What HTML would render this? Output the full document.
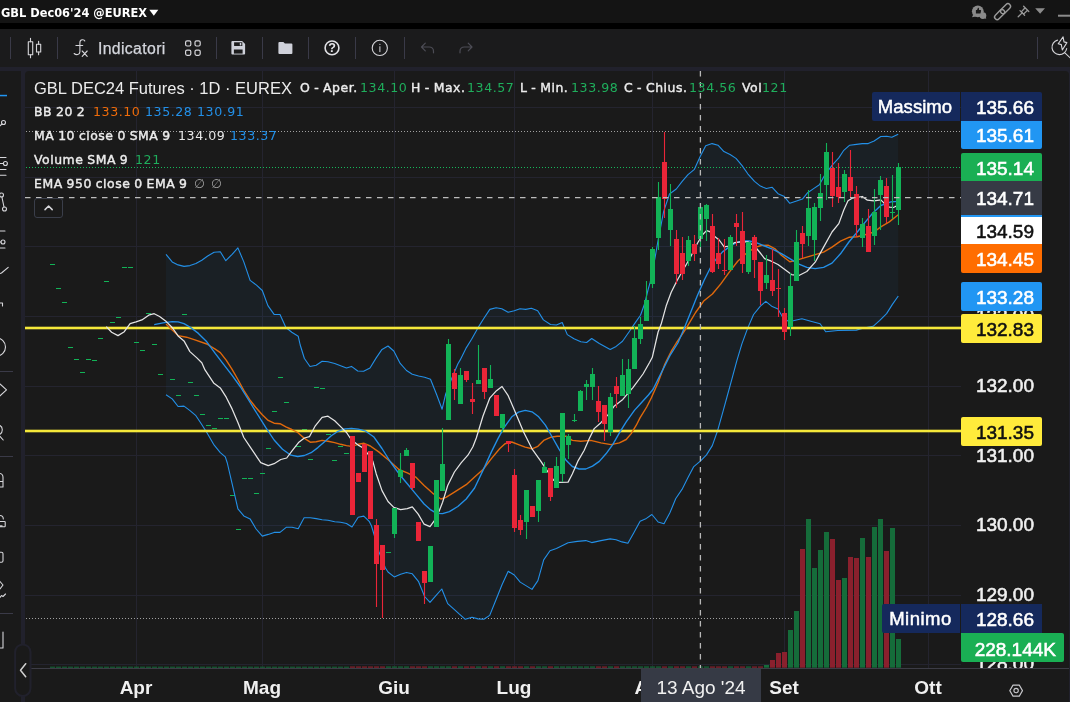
<!DOCTYPE html>
<html lang="it">
<head>
<meta charset="utf-8">
<title>GBL Dec06'24 @EUREX</title>
<style>
*{box-sizing:border-box;margin:0;padding:0}
html,body{width:1070px;height:702px;overflow:hidden;background:#21212c}
body{position:relative;font-family:"Liberation Sans",sans-serif;color:#e6e6e6}
.abs{position:absolute}
.leg,.val,.pl,.ax,.tl,.txt{will-change:transform}
#titlebar{left:0;top:0;width:1070px;height:23px;background:#141414}
#blackstrip{left:0;top:23px;width:1070px;height:6px;background:#000}
#toolbar{left:0;top:29px;width:1070px;height:38px;background:#1b1b1c}
#leftpanel{left:0;top:71px;width:21px;height:631px;background:#1a1a1a}
#chartpanel{left:25px;top:71px;width:1044px;height:631px;background:#1a1a1a;border-radius:4px 4px 0 0}
#title{left:1px;top:5px;font-family:"DejaVu Sans","Liberation Sans",sans-serif;font-weight:bold;font-size:11.4px;line-height:16px;color:#fff;white-space:pre;letter-spacing:0}
.tsep{position:absolute;top:37px;width:1px;height:22px;background:#3a3a48}
.lsep{position:absolute;left:0;width:13px;height:1px;background:#3a3a48}
.leg{position:absolute;white-space:pre;font-family:"DejaVu Sans","Liberation Sans",sans-serif;font-weight:normal;font-size:12.45px;letter-spacing:0.52px;word-spacing:-0.6px;-webkit-text-stroke:0.4px #ececec;line-height:18px;color:#ececec}
.val{position:absolute;white-space:pre;font-family:"DejaVu Sans","Liberation Sans",sans-serif;font-size:12.6px;letter-spacing:0.55px;line-height:18px;margin-left:-0.6px}
.g{color:#1fae5c}.b{color:#2390e8}.o{color:#ef6c0a}.w{color:#e6e6e6}.gr{color:#9a9a9a}
.pl{position:absolute;left:961px;width:81px;height:28.6px;font-weight:normal;-webkit-text-stroke:0.55px;padding-top:2px;font-size:19px;line-height:28.6px;text-align:right;padding-right:8px;color:#fff;white-space:pre}
.ax{position:absolute;left:961px;width:81px;font-weight:normal;-webkit-text-stroke:0.55px;font-size:19px;line-height:22px;height:22px;text-align:right;padding-right:8px;color:#f0f0f0;white-space:pre}
.tl{position:absolute;top:677px;font-weight:bold;font-size:19px;line-height:22px;color:#f0f0f0;white-space:pre;transform:translateX(-50%)}
</style>
</head>
<body>
<div id="titlebar" class="abs"></div>
<div id="blackstrip" class="abs"></div>
<div id="toolbar" class="abs"></div>
<div id="leftpanel" class="abs"></div>
<div id="chartpanel" class="abs"></div>

<div id="title" class="abs txt">GBL Dec06'24 @EUREX</div>

<!-- toolbar separators -->
<div class="tsep" style="left:10px"></div>
<div class="tsep" style="left:57px"></div>
<div class="tsep" style="left:216px"></div>
<div class="tsep" style="left:262px"></div>
<div class="tsep" style="left:308px"></div>
<div class="tsep" style="left:355px"></div>
<div class="tsep" style="left:404px"></div>
<div class="tsep" style="left:1037px"></div>
<div class="abs txt" style="left:97.6px;top:39.3px;font-size:15.8px;letter-spacing:0.35px;-webkit-text-stroke:0.25px #d4d6dd;line-height:20px;color:#d4d6dd;white-space:pre">Indicatori</div>

<!-- left separators -->
<div class="lsep" style="top:371px"></div>
<div class="lsep" style="top:456px"></div>
<div class="lsep" style="top:613px"></div>

<svg class="abs" style="left:0;top:0" width="1070" height="702" viewBox="0 0 1070 702">
<rect x="136.0" y="71" width="1" height="597" fill="#24242f"/>
<rect x="262.0" y="71" width="1" height="597" fill="#24242f"/>
<rect x="394.0" y="71" width="1" height="597" fill="#24242f"/>
<rect x="514.0" y="71" width="1" height="597" fill="#24242f"/>
<rect x="652.0" y="71" width="1" height="597" fill="#24242f"/>
<rect x="784.0" y="71" width="1" height="597" fill="#24242f"/>
<rect x="928.0" y="71" width="1" height="597" fill="#24242f"/>
<rect x="25" y="664.0" width="936" height="1" fill="#24242f"/>
<rect x="25" y="595.0" width="936" height="1" fill="#24242f"/>
<rect x="25" y="525.0" width="936" height="1" fill="#24242f"/>
<rect x="25" y="455.0" width="936" height="1" fill="#24242f"/>
<rect x="25" y="386.0" width="936" height="1" fill="#24242f"/>
<rect x="25" y="316.0" width="936" height="1" fill="#24242f"/>
<rect x="25" y="246.0" width="936" height="1" fill="#24242f"/>
<rect x="25" y="177.0" width="936" height="1" fill="#24242f"/>
<rect x="25" y="107.0" width="936" height="1" fill="#24242f"/>
<polygon points="166.0,254.3 172.2,261.9 178.1,264.9 184.0,266.4 190.0,265.6 195.9,263.6 201.8,260.2 207.7,256.0 214.1,252.3 220.3,251.8 225.8,260.7 232.1,254.3 237.9,247.9 243.8,261.9 250.1,280.4 256.5,285.1 262.3,290.5 267.9,305.6 274.1,314.4 280.0,314.5 285.9,327.5 291.8,332.2 298.2,336.2 300.2,345.0 304.4,358.5 310.0,366.5 316.2,365.2 322.1,361.3 328.0,361.8 334.7,363.5 340.6,365.7 346.5,368.0 351.5,366.4 357.7,371.0 363.6,371.3 370.0,368.0 376.2,357.9 382.0,349.4 388.0,346.0 393.8,351.0 400.2,363.4 406.5,370.5 412.3,374.2 418.6,376.0 424.6,377.2 430.5,379.2 436.4,394.0 442.1,409.2 445.7,394.0 451.9,378.0 457.8,364.0 460.2,359.9 465.9,348.4 471.6,339.3 477.9,327.9 483.6,318.7 489.8,309.4 496.1,307.7 501.8,308.7 508.1,312.3 514.3,310.8 520.0,308.7 525.7,309.4 531.4,308.3 537.7,310.8 543.4,319.9 550.5,324.5 556.4,325.0 562.2,322.5 567.3,334.6 574.0,338.8 580.8,341.8 586.6,342.5 591.7,338.5 599.3,343.5 610.2,349.4 616.1,346.4 622.5,341.3 629.5,331.2 634.6,323.6 640.5,315.2 644.7,303.5 648.0,290.0 650.2,282.2 655.2,257.0 657.8,241.8 660.3,229.0 663.6,211.7 669.5,194.0 676.3,189.0 682.2,181.4 688.0,174.7 694.4,169.3 700.3,156.2 705.7,145.7 712.1,143.6 718.0,145.2 723.9,151.6 730.1,154.5 736.0,158.4 741.9,165.4 747.8,173.8 754.5,181.4 760.4,186.1 766.3,188.5 772.2,187.3 778.0,193.7 783.9,196.2 789.8,203.3 796.6,201.1 802.4,199.1 807.7,192.7 813.6,188.6 819.4,184.8 824.5,175.5 832.0,165.4 838.8,157.9 843.8,150.3 849.7,145.2 856.5,144.4 862.3,143.6 868.2,143.6 874.1,141.0 880.8,136.5 886.7,136.3 891.8,137.3 898.2,134.3 898.3,296.0 892.4,304.4 886.6,313.6 879.8,320.4 873.1,326.3 863.8,328.0 856.3,330.1 837.8,330.5 825.7,331.8 820.1,323.7 810.8,321.2 801.9,318.7 793.2,320.7 788.0,321.0 783.1,317.9 778.0,308.9 772.2,306.6 765.8,301.4 760.4,306.1 753.6,314.5 747.8,327.9 741.9,343.9 736.8,360.8 731.8,379.3 726.7,398.0 723.3,410.3 717.4,431.3 712.3,445.6 706.5,454.9 700.6,460.8 693.8,466.6 688.0,477.6 682.0,489.4 675.8,498.5 669.9,512.8 664.0,523.7 658.1,522.0 651.9,514.5 646.4,518.4 640.1,521.2 633.7,533.0 627.9,543.3 622.0,541.9 616.1,539.7 610.2,538.9 600.9,540.6 591.7,542.6 585.8,540.6 577.4,541.4 568.1,542.8 556.4,548.6 550.0,550.7 543.7,559.9 537.9,580.6 532.0,589.4 520.2,582.1 514.3,575.0 508.2,571.3 502.0,584.8 495.6,600.8 489.7,615.4 483.8,619.3 478.0,618.9 472.0,617.2 465.3,619.3 459.4,614.2 453.6,608.8 447.7,603.6 441.8,589.0 435.9,595.7 430.0,602.4 424.6,596.5 418.6,581.7 412.3,573.8 406.5,572.5 400.6,574.2 394.2,576.9 388.0,572.0 385.4,568.0 379.0,552.0 374.5,536.0 371.5,526.0 369.4,521.7 363.8,516.1 358.2,517.2 352.0,527.0 346.5,523.5 340.6,522.3 334.7,521.8 328.0,520.3 322.1,519.8 316.2,518.6 310.3,517.8 304.1,517.8 298.2,528.7 292.1,527.3 286.2,527.3 280.0,532.4 274.1,532.4 268.2,534.4 262.3,536.1 256.1,529.0 250.1,518.9 243.8,515.9 237.9,508.8 232.1,483.6 227.3,463.0 225.3,456.9 220.3,452.7 213.6,444.3 206.8,432.5 200.9,423.2 195.9,415.7 190.0,410.6 184.0,406.1 178.1,406.5 172.2,398.9 166.0,394.7" fill="#2196f3" fill-opacity="0.055"/>
<line x1="26" x2="882" y1="618.5" y2="618.5" stroke="#a0a0a0" stroke-width="1" stroke-dasharray="1 2" shape-rendering="crispEdges"/>
<rect x="50.0" y="666.7" width="5" height="1" fill="#156c3a"/>
<rect x="56.0" y="666.7" width="5" height="1" fill="#156c3a"/>
<rect x="62.0" y="666.7" width="5" height="1" fill="#156c3a"/>
<rect x="68.0" y="666.7" width="5" height="1" fill="#156c3a"/>
<rect x="74.0" y="666.7" width="5" height="1" fill="#156c3a"/>
<rect x="80.0" y="666.7" width="5" height="1" fill="#156c3a"/>
<rect x="86.0" y="666.7" width="5" height="1" fill="#156c3a"/>
<rect x="92.0" y="666.7" width="5" height="1" fill="#156c3a"/>
<rect x="98.0" y="666.7" width="5" height="1" fill="#156c3a"/>
<rect x="104.0" y="666.7" width="5" height="1" fill="#156c3a"/>
<rect x="110.0" y="666.7" width="5" height="1" fill="#156c3a"/>
<rect x="116.0" y="666.7" width="5" height="1" fill="#156c3a"/>
<rect x="122.0" y="666.7" width="5" height="1" fill="#156c3a"/>
<rect x="128.0" y="666.7" width="5" height="1" fill="#156c3a"/>
<rect x="134.0" y="666.7" width="5" height="1" fill="#156c3a"/>
<rect x="140.0" y="666.7" width="5" height="1" fill="#156c3a"/>
<rect x="146.0" y="666.7" width="5" height="1" fill="#156c3a"/>
<rect x="152.0" y="666.7" width="5" height="1" fill="#156c3a"/>
<rect x="158.0" y="666.7" width="5" height="1" fill="#156c3a"/>
<rect x="164.0" y="666.7" width="5" height="1" fill="#156c3a"/>
<rect x="170.0" y="666.7" width="5" height="1" fill="#156c3a"/>
<rect x="176.0" y="666.7" width="5" height="1" fill="#156c3a"/>
<rect x="182.0" y="666.7" width="5" height="1" fill="#156c3a"/>
<rect x="188.0" y="666.7" width="5" height="1" fill="#156c3a"/>
<rect x="194.0" y="666.7" width="5" height="1" fill="#156c3a"/>
<rect x="200.0" y="666.7" width="5" height="1" fill="#156c3a"/>
<rect x="206.0" y="666.7" width="5" height="1" fill="#156c3a"/>
<rect x="212.0" y="666.7" width="5" height="1" fill="#156c3a"/>
<rect x="218.0" y="666.7" width="5" height="1" fill="#156c3a"/>
<rect x="224.0" y="666.7" width="5" height="1" fill="#156c3a"/>
<rect x="230.0" y="666.7" width="5" height="1" fill="#156c3a"/>
<rect x="236.0" y="666.7" width="5" height="1" fill="#156c3a"/>
<rect x="242.0" y="666.7" width="5" height="1" fill="#156c3a"/>
<rect x="248.0" y="666.7" width="5" height="1" fill="#156c3a"/>
<rect x="254.0" y="666.7" width="5" height="1" fill="#156c3a"/>
<rect x="260.0" y="666.7" width="5" height="1" fill="#156c3a"/>
<rect x="266.0" y="666.7" width="5" height="1" fill="#156c3a"/>
<rect x="272.0" y="666.7" width="5" height="1" fill="#156c3a"/>
<rect x="278.0" y="666.7" width="5" height="1" fill="#156c3a"/>
<rect x="284.0" y="666.7" width="5" height="1" fill="#156c3a"/>
<rect x="290.0" y="666.7" width="5" height="1" fill="#156c3a"/>
<rect x="296.0" y="666.7" width="5" height="1" fill="#156c3a"/>
<rect x="302.0" y="666.7" width="5" height="1" fill="#156c3a"/>
<rect x="308.0" y="666.7" width="5" height="1" fill="#156c3a"/>
<rect x="314.0" y="666.7" width="5" height="1" fill="#156c3a"/>
<rect x="320.0" y="666.7" width="5" height="1" fill="#156c3a"/>
<rect x="326.0" y="666.7" width="5" height="1" fill="#156c3a"/>
<rect x="332.0" y="666.7" width="5" height="1" fill="#156c3a"/>
<rect x="338.0" y="666.7" width="5" height="1" fill="#156c3a"/>
<rect x="344.0" y="666.7" width="5" height="1" fill="#156c3a"/>
<rect x="350.0" y="666.5" width="5" height="1.2" fill="#8a202d"/>
<rect x="356.0" y="666.5" width="5" height="1.2" fill="#8a202d"/>
<rect x="362.0" y="666.5" width="5" height="1.2" fill="#8a202d"/>
<rect x="368.0" y="666.5" width="5" height="1.2" fill="#8a202d"/>
<rect x="374.0" y="666.5" width="5" height="1.2" fill="#8a202d"/>
<rect x="380.0" y="666.5" width="5" height="1.2" fill="#8a202d"/>
<rect x="386.0" y="666.5" width="5" height="1.2" fill="#156c3a"/>
<rect x="392.0" y="666.5" width="5" height="1.2" fill="#156c3a"/>
<rect x="398.0" y="666.5" width="5" height="1.2" fill="#156c3a"/>
<rect x="404.0" y="666.5" width="5" height="1.2" fill="#156c3a"/>
<rect x="410.0" y="666.5" width="5" height="1.2" fill="#8a202d"/>
<rect x="416.0" y="666.5" width="5" height="1.2" fill="#8a202d"/>
<rect x="422.0" y="666.5" width="5" height="1.2" fill="#8a202d"/>
<rect x="428.0" y="666.5" width="5" height="1.2" fill="#156c3a"/>
<rect x="434.0" y="666.5" width="5" height="1.2" fill="#156c3a"/>
<rect x="440.0" y="666.5" width="5" height="1.2" fill="#156c3a"/>
<rect x="446.0" y="666.5" width="5" height="1.2" fill="#156c3a"/>
<rect x="452.0" y="666.5" width="5" height="1.2" fill="#8a202d"/>
<rect x="458.0" y="666.5" width="5" height="1.2" fill="#156c3a"/>
<rect x="464.0" y="666.5" width="5" height="1.2" fill="#8a202d"/>
<rect x="470.0" y="666.5" width="5" height="1.2" fill="#8a202d"/>
<rect x="476.0" y="666.5" width="5" height="1.2" fill="#156c3a"/>
<rect x="482.0" y="666.5" width="5" height="1.2" fill="#8a202d"/>
<rect x="488.0" y="666.5" width="5" height="1.2" fill="#156c3a"/>
<rect x="494.0" y="666.5" width="5" height="1.2" fill="#8a202d"/>
<rect x="500.0" y="666.5" width="5" height="1.2" fill="#156c3a"/>
<rect x="506.0" y="666.5" width="5" height="1.2" fill="#8a202d"/>
<rect x="512.0" y="666.5" width="5" height="1.2" fill="#8a202d"/>
<rect x="518.0" y="666.5" width="5" height="1.2" fill="#8a202d"/>
<rect x="524.0" y="666.5" width="5" height="1.2" fill="#156c3a"/>
<rect x="530.0" y="666.5" width="5" height="1.2" fill="#8a202d"/>
<rect x="536.0" y="666.5" width="5" height="1.2" fill="#156c3a"/>
<rect x="542.0" y="666.5" width="5" height="1.2" fill="#156c3a"/>
<rect x="548.0" y="666.5" width="5" height="1.2" fill="#8a202d"/>
<rect x="554.0" y="666.5" width="5" height="1.2" fill="#156c3a"/>
<rect x="560.0" y="666.5" width="5" height="1.2" fill="#156c3a"/>
<rect x="566.0" y="666.5" width="5" height="1.2" fill="#156c3a"/>
<rect x="572.0" y="666.5" width="5" height="1.2" fill="#156c3a"/>
<rect x="578.0" y="666.5" width="5" height="1.2" fill="#156c3a"/>
<rect x="584.0" y="666.5" width="5" height="1.2" fill="#156c3a"/>
<rect x="590.0" y="666.5" width="5" height="1.2" fill="#156c3a"/>
<rect x="596.0" y="666.5" width="5" height="1.2" fill="#8a202d"/>
<rect x="602.0" y="666.5" width="5" height="1.2" fill="#8a202d"/>
<rect x="608.0" y="666.5" width="5" height="1.2" fill="#156c3a"/>
<rect x="614.0" y="666.5" width="5" height="1.2" fill="#8a202d"/>
<rect x="620.0" y="666.5" width="5" height="1.2" fill="#156c3a"/>
<rect x="626.0" y="666.5" width="5" height="1.2" fill="#156c3a"/>
<rect x="632.0" y="666.5" width="5" height="1.2" fill="#156c3a"/>
<rect x="638.0" y="666.5" width="5" height="1.2" fill="#156c3a"/>
<rect x="644.0" y="666.5" width="5" height="1.2" fill="#156c3a"/>
<rect x="650.0" y="666.5" width="5" height="1.2" fill="#156c3a"/>
<rect x="656.0" y="666.5" width="5" height="1.2" fill="#156c3a"/>
<rect x="662.0" y="666.5" width="5" height="1.2" fill="#8a202d"/>
<rect x="668.0" y="666.5" width="5" height="1.2" fill="#156c3a"/>
<rect x="674.0" y="666.5" width="5" height="1.2" fill="#8a202d"/>
<rect x="680.0" y="666.5" width="5" height="1.2" fill="#8a202d"/>
<rect x="686.0" y="666.5" width="5" height="1.2" fill="#156c3a"/>
<rect x="692.0" y="666.5" width="5" height="1.2" fill="#8a202d"/>
<rect x="698.0" y="666.5" width="5" height="1.2" fill="#156c3a"/>
<rect x="704.0" y="666.5" width="5" height="1.2" fill="#156c3a"/>
<rect x="710.0" y="666.5" width="5" height="1.2" fill="#8a202d"/>
<rect x="716.0" y="666.5" width="5" height="1.2" fill="#8a202d"/>
<rect x="722.0" y="666.5" width="5" height="1.2" fill="#8a202d"/>
<rect x="728.0" y="666.5" width="5" height="1.2" fill="#156c3a"/>
<rect x="734.0" y="666.5" width="5" height="1.2" fill="#8a202d"/>
<rect x="740.0" y="666.5" width="5" height="1.2" fill="#8a202d"/>
<rect x="746.0" y="666.5" width="5" height="1.2" fill="#156c3a"/>
<rect x="752.0" y="666.5" width="5" height="1.2" fill="#8a202d"/>
<rect x="758.0" y="666.5" width="5" height="1.2" fill="#8a202d"/>
<rect x="764.0" y="665" width="5" height="2.7" fill="#156c3a"/>
<rect x="770.0" y="660" width="5" height="7.7" fill="#8a202d"/>
<rect x="776.0" y="653" width="5" height="14.7" fill="#8a202d"/>
<rect x="782.0" y="652" width="5" height="15.7" fill="#8a202d"/>
<rect x="788.0" y="630" width="5" height="37.7" fill="#156c3a"/>
<rect x="794.0" y="611" width="5" height="56.7" fill="#156c3a"/>
<rect x="800.0" y="549" width="5" height="118.7" fill="#8a202d"/>
<rect x="806.0" y="519" width="5" height="148.7" fill="#156c3a"/>
<rect x="812.0" y="568" width="5" height="99.7" fill="#156c3a"/>
<rect x="818.0" y="550" width="5" height="117.7" fill="#156c3a"/>
<rect x="824.0" y="532" width="5" height="135.7" fill="#156c3a"/>
<rect x="830.0" y="539" width="5" height="128.7" fill="#8a202d"/>
<rect x="836.0" y="580" width="5" height="87.7" fill="#8a202d"/>
<rect x="842.0" y="578" width="5" height="89.7" fill="#156c3a"/>
<rect x="848.0" y="557" width="5" height="110.7" fill="#8a202d"/>
<rect x="854.0" y="558" width="5" height="109.7" fill="#8a202d"/>
<rect x="860.0" y="538" width="5" height="129.7" fill="#156c3a"/>
<rect x="866.0" y="557" width="5" height="110.7" fill="#8a202d"/>
<rect x="872.0" y="527" width="5" height="140.7" fill="#156c3a"/>
<rect x="878.0" y="519" width="5" height="148.7" fill="#156c3a"/>
<rect x="884.0" y="551" width="5" height="116.7" fill="#8a202d"/>
<rect x="890.0" y="528" width="5" height="139.7" fill="#156c3a"/>
<rect x="896.0" y="639" width="5" height="28.7" fill="#156c3a"/>
<line x1="26" x2="961" y1="131.5" y2="131.5" stroke="#a0a0a0" stroke-width="1" stroke-dasharray="1 2" shape-rendering="crispEdges"/>
<line x1="26" x2="961" y1="167.5" y2="167.5" stroke="#16b85a" stroke-width="1" stroke-dasharray="1 2" shape-rendering="crispEdges"/>
<rect x="50.0" y="264" width="5" height="1" fill="#12b357"/>
<rect x="56.0" y="288" width="5" height="1" fill="#12b357"/>
<rect x="62.0" y="302" width="5" height="1" fill="#12b357"/>
<rect x="68.0" y="347" width="5" height="1" fill="#12b357"/>
<rect x="74.0" y="359" width="5" height="1" fill="#12b357"/>
<rect x="80.0" y="372" width="5" height="1" fill="#12b357"/>
<rect x="86.0" y="359" width="5" height="1" fill="#12b357"/>
<rect x="92.0" y="360" width="5" height="1" fill="#12b357"/>
<rect x="98.0" y="338" width="5" height="1" fill="#12b357"/>
<rect x="104.0" y="281" width="5" height="1" fill="#12b357"/>
<rect x="110.0" y="322" width="5" height="1" fill="#12b357"/>
<rect x="116.0" y="317" width="5" height="1" fill="#12b357"/>
<rect x="122.0" y="267" width="5" height="1" fill="#12b357"/>
<rect x="128.0" y="267" width="5" height="1" fill="#12b357"/>
<rect x="134.0" y="342" width="5" height="1" fill="#12b357"/>
<rect x="140.0" y="350" width="5" height="1" fill="#12b357"/>
<rect x="146.0" y="313" width="5" height="1" fill="#12b357"/>
<rect x="152.0" y="344" width="5" height="1" fill="#12b357"/>
<rect x="158.0" y="374" width="5" height="1" fill="#12b357"/>
<rect x="164.0" y="327" width="5" height="1" fill="#12b357"/>
<rect x="170.0" y="379" width="5" height="1" fill="#12b357"/>
<rect x="176.0" y="395" width="5" height="1" fill="#12b357"/>
<rect x="182.0" y="314" width="5" height="1" fill="#12b357"/>
<rect x="188.0" y="382" width="5" height="1" fill="#12b357"/>
<rect x="194.0" y="395" width="5" height="1" fill="#12b357"/>
<rect x="200.0" y="414" width="5" height="1" fill="#12b357"/>
<rect x="206.0" y="425" width="5" height="1" fill="#12b357"/>
<rect x="212.0" y="428" width="5" height="1" fill="#12b357"/>
<rect x="218.0" y="418" width="5" height="1" fill="#12b357"/>
<rect x="224.0" y="418" width="5" height="1" fill="#12b357"/>
<rect x="230.0" y="495" width="5" height="1" fill="#12b357"/>
<rect x="236.0" y="529" width="5" height="1" fill="#12b357"/>
<rect x="242.0" y="478" width="5" height="1" fill="#12b357"/>
<rect x="248.0" y="478" width="5" height="1" fill="#12b357"/>
<rect x="254.0" y="493" width="5" height="1" fill="#12b357"/>
<rect x="260.0" y="473" width="5" height="1" fill="#12b357"/>
<rect x="266.0" y="448" width="5" height="1" fill="#12b357"/>
<rect x="272.0" y="411" width="5" height="1" fill="#12b357"/>
<rect x="278.0" y="377" width="5" height="1" fill="#12b357"/>
<rect x="284.0" y="402" width="5" height="1" fill="#12b357"/>
<rect x="290.0" y="430" width="5" height="1" fill="#12b357"/>
<rect x="296.0" y="446" width="5" height="1" fill="#12b357"/>
<rect x="302.0" y="429" width="5" height="1" fill="#12b357"/>
<rect x="308.0" y="459" width="5" height="1" fill="#12b357"/>
<rect x="314.0" y="387" width="5" height="1" fill="#12b357"/>
<rect x="320.0" y="388" width="5" height="1" fill="#12b357"/>
<rect x="326.0" y="434" width="5" height="1" fill="#12b357"/>
<rect x="332.0" y="460" width="5" height="1" fill="#12b357"/>
<rect x="338.0" y="446" width="5" height="1" fill="#12b357"/>
<rect x="344.0" y="453" width="5" height="1" fill="#12b357"/>
<polyline points="166.0,254.3 172.2,261.9 178.1,264.9 184.0,266.4 190.0,265.6 195.9,263.6 201.8,260.2 207.7,256.0 214.1,252.3 220.3,251.8 225.8,260.7 232.1,254.3 237.9,247.9 243.8,261.9 250.1,280.4 256.5,285.1 262.3,290.5 267.9,305.6 274.1,314.4 280.0,314.5 285.9,327.5 291.8,332.2 298.2,336.2 300.2,345.0 304.4,358.5 310.0,366.5 316.2,365.2 322.1,361.3 328.0,361.8 334.7,363.5 340.6,365.7 346.5,368.0 351.5,366.4 357.7,371.0 363.6,371.3 370.0,368.0 376.2,357.9 382.0,349.4 388.0,346.0 393.8,351.0 400.2,363.4 406.5,370.5 412.3,374.2 418.6,376.0 424.6,377.2 430.5,379.2 436.4,394.0 442.1,409.2 445.7,394.0 451.9,378.0 457.8,364.0 460.2,359.9 465.9,348.4 471.6,339.3 477.9,327.9 483.6,318.7 489.8,309.4 496.1,307.7 501.8,308.7 508.1,312.3 514.3,310.8 520.0,308.7 525.7,309.4 531.4,308.3 537.7,310.8 543.4,319.9 550.5,324.5 556.4,325.0 562.2,322.5 567.3,334.6 574.0,338.8 580.8,341.8 586.6,342.5 591.7,338.5 599.3,343.5 610.2,349.4 616.1,346.4 622.5,341.3 629.5,331.2 634.6,323.6 640.5,315.2 644.7,303.5 648.0,290.0 650.2,282.2 655.2,257.0 657.8,241.8 660.3,229.0 663.6,211.7 669.5,194.0 676.3,189.0 682.2,181.4 688.0,174.7 694.4,169.3 700.3,156.2 705.7,145.7 712.1,143.6 718.0,145.2 723.9,151.6 730.1,154.5 736.0,158.4 741.9,165.4 747.8,173.8 754.5,181.4 760.4,186.1 766.3,188.5 772.2,187.3 778.0,193.7 783.9,196.2 789.8,203.3 796.6,201.1 802.4,199.1 807.7,192.7 813.6,188.6 819.4,184.8 824.5,175.5 832.0,165.4 838.8,157.9 843.8,150.3 849.7,145.2 856.5,144.4 862.3,143.6 868.2,143.6 874.1,141.0 880.8,136.5 886.7,136.3 891.8,137.3 898.2,134.3" fill="none" stroke="#2390e8" stroke-width="1.1" stroke-linejoin="round"/>
<polyline points="166.0,394.7 172.2,398.9 178.1,406.5 184.0,406.1 190.0,410.6 195.9,415.7 200.9,423.2 206.8,432.5 213.6,444.3 220.3,452.7 225.3,456.9 227.3,463.0 232.1,483.6 237.9,508.8 243.8,515.9 250.1,518.9 256.1,529.0 262.3,536.1 268.2,534.4 274.1,532.4 280.0,532.4 286.2,527.3 292.1,527.3 298.2,528.7 304.1,517.8 310.3,517.8 316.2,518.6 322.1,519.8 328.0,520.3 334.7,521.8 340.6,522.3 346.5,523.5 352.0,527.0 358.2,517.2 363.8,516.1 369.4,521.7 371.5,526.0 374.5,536.0 379.0,552.0 385.4,568.0 388.0,572.0 394.2,576.9 400.6,574.2 406.5,572.5 412.3,573.8 418.6,581.7 424.6,596.5 430.0,602.4 435.9,595.7 441.8,589.0 447.7,603.6 453.6,608.8 459.4,614.2 465.3,619.3 472.0,617.2 478.0,618.9 483.8,619.3 489.7,615.4 495.6,600.8 502.0,584.8 508.2,571.3 514.3,575.0 520.2,582.1 532.0,589.4 537.9,580.6 543.7,559.9 550.0,550.7 556.4,548.6 568.1,542.8 577.4,541.4 585.8,540.6 591.7,542.6 600.9,540.6 610.2,538.9 616.1,539.7 622.0,541.9 627.9,543.3 633.7,533.0 640.1,521.2 646.4,518.4 651.9,514.5 658.1,522.0 664.0,523.7 669.9,512.8 675.8,498.5 682.0,489.4 688.0,477.6 693.8,466.6 700.6,460.8 706.5,454.9 712.3,445.6 717.4,431.3 723.3,410.3 726.7,398.0 731.8,379.3 736.8,360.8 741.9,343.9 747.8,327.9 753.6,314.5 760.4,306.1 765.8,301.4 772.2,306.6 778.0,308.9 783.1,317.9 788.0,321.0 793.2,320.7 801.9,318.7 810.8,321.2 820.1,323.7 825.7,331.8 837.8,330.5 856.3,330.1 863.8,328.0 873.1,326.3 879.8,320.4 886.6,313.6 892.4,304.4 898.3,296.0" fill="none" stroke="#2390e8" stroke-width="1.1" stroke-linejoin="round"/>
<rect x="25" y="326.7" width="936" height="2.6" fill="#f5e83a"/>
<rect x="25" y="429.7" width="936" height="2.6" fill="#f5e83a"/>
<polyline points="166.0,324.1 172.2,330.0 178.1,335.6 186.5,337.2 194.9,339.8 206.8,344.0 215.2,349.2 220.3,352.6 226.2,360.1 232.1,369.4 237.9,379.5 243.8,390.4 249.7,399.7 255.6,407.2 262.3,414.8 268.2,420.4 274.1,423.2 280.0,423.7 285.9,426.9 291.8,429.5 297.7,432.5 304.4,438.4 310.3,442.2 316.2,441.7 322.1,440.4 328.0,441.2 334.7,442.6 340.6,444.3 346.5,445.6 351.5,446.4 358.2,444.3 364.1,443.3 370.3,446.0 378.7,451.9 388.8,460.3 398.9,469.5 407.3,472.9 415.7,477.1 424.1,485.5 432.5,493.1 440.9,499.0 446.0,497.3 454.4,492.2 466.2,484.7 474.6,477.1 483.0,469.5 491.4,458.6 499.8,448.5 505.0,443.7 511.8,442.0 518.5,444.6 525.2,447.1 532.0,448.8 537.9,446.3 543.7,440.4 550.5,437.3 557.2,436.2 566.5,436.2 572.3,440.4 580.8,441.2 590.8,440.4 600.9,442.9 611.0,444.6 619.4,442.9 626.2,439.5 631.2,433.6 636.3,425.2 640.0,417.9 646.7,407.0 651.4,397.7 658.1,382.5 664.9,364.0 671.6,350.6 676.3,343.0 685.5,329.3 695.6,312.5 704.0,300.7 712.4,294.0 720.8,283.9 729.3,272.1 737.7,261.2 746.1,253.6 754.5,247.7 761.2,245.5 768.0,245.2 774.7,248.6 781.4,255.3 789.8,261.7 798.4,259.7 806.8,257.2 815.2,254.7 823.6,252.2 832.0,247.1 840.5,241.2 848.9,237.3 857.3,236.7 865.7,234.5 874.1,232.0 880.8,226.9 889.3,221.9 898.2,214.8" fill="none" stroke="#e0690c" stroke-width="1.4" stroke-linejoin="round"/>
<polyline points="154.2,324.6 163.0,322.8 172.2,321.6 178.1,321.9 184.0,323.6 190.7,327.5 198.4,333.4 206.8,341.8 215.2,353.4 223.6,364.3 232.1,375.3 240.5,387.0 248.9,400.5 257.3,414.0 265.7,427.4 274.1,440.0 282.5,449.3 290.9,455.2 297.7,456.5 304.4,455.5 311.1,452.7 317.9,447.6 324.6,441.7 331.3,435.8 338.0,431.3 344.8,428.8 351.5,428.3 358.2,429.1 365.0,430.8 373.6,436.7 382.0,448.5 390.5,462.0 398.9,473.7 407.3,483.8 415.7,493.9 424.1,504.0 430.8,509.9 436.7,513.3 442.6,513.6 449.4,511.6 457.8,506.5 466.2,499.0 474.6,488.0 483.0,470.4 491.4,451.9 498.1,438.4 504.0,427.7 511.8,416.8 518.5,412.1 525.2,410.4 532.0,411.8 538.7,416.8 545.4,425.2 552.2,437.0 558.9,448.8 565.6,459.7 572.3,466.5 579.1,469.0 585.8,469.0 592.5,466.1 599.3,461.4 606.0,453.8 612.7,444.6 619.4,432.8 626.2,421.9 634.6,410.1 640.0,404.2 648.4,395.0 653.1,389.3 661.5,372.4 669.9,355.6 677.9,343.0 683.8,329.3 690.6,312.5 697.3,295.7 704.0,280.5 709.9,268.7 715.8,259.5 722.5,251.9 729.3,246.9 736.0,242.7 742.7,241.0 749.4,241.0 756.2,242.7 764.6,246.0 773.0,249.4 781.4,253.6 789.8,258.6 798.4,263.9 806.8,267.3 815.2,268.6 823.6,267.3 832.0,263.1 840.5,253.8 848.9,242.0 857.3,232.0 864.0,223.6 872.4,213.5 880.8,205.5 890.9,201.9 898.2,201.3" fill="none" stroke="#2390e8" stroke-width="1.35" stroke-linejoin="round"/>
<polyline points="106.3,326.6 111.6,332.2 118.0,335.6 124.3,331.7 130.1,323.6 136.0,321.9 141.9,319.9 148.7,315.2 154.2,313.7 159.6,316.5 166.3,321.6 172.2,327.5 178.1,335.9 184.0,340.9 189.9,351.6 196.6,357.6 201.8,362.7 205.0,369.9 213.6,382.9 220.3,387.9 226.2,397.2 232.1,408.9 237.9,422.4 243.8,437.5 250.6,447.6 257.3,457.7 260.7,462.6 268.2,465.6 274.1,463.7 280.8,459.5 286.7,458.0 292.6,450.1 298.5,442.6 304.4,438.0 309.4,436.7 315.3,425.8 322.1,417.3 328.0,416.2 334.7,420.7 340.6,426.6 346.5,432.5 351.5,440.0 358.2,445.1 364.1,448.5 372.8,461.1 376.2,473.7 382.0,490.6 388.0,501.5 393.8,507.4 400.6,509.6 407.3,508.7 412.3,506.9 418.2,514.1 424.1,524.2 430.0,526.7 434.2,520.8 439.3,510.7 442.6,502.3 447.7,485.5 454.4,472.0 461.1,462.8 467.9,455.2 472.9,446.8 476.3,438.0 483.0,416.0 489.7,398.2 496.5,390.7 502.0,386.5 508.2,395.7 515.1,411.8 523.6,432.0 532.0,448.8 540.4,460.6 547.1,470.7 553.8,480.4 558.9,482.4 568.1,482.1 572.3,474.0 578.2,460.6 584.1,450.5 589.2,438.7 594.2,428.6 600.9,422.7 607.7,415.1 614.4,405.9 622.8,399.4 632.9,387.6 643.0,374.0 649.7,362.3 652.3,357.3 658.1,332.0 661.1,324.3 666.2,305.8 671.2,292.3 677.1,280.5 683.8,268.7 690.6,257.0 697.3,243.5 702.3,235.0 706.5,230.6 709.9,231.7 714.1,236.0 719.2,240.0 724.2,246.9 729.3,246.0 734.3,242.7 741.0,241.8 747.8,241.8 754.5,246.0 759.5,252.0 764.6,258.6 771.3,261.2 778.0,264.5 784.8,269.6 791.5,274.6 798.4,275.7 806.8,271.5 815.2,262.2 823.6,247.1 832.0,232.0 838.8,223.6 843.8,210.0 848.0,200.8 852.2,198.2 862.3,196.5 867.4,200.2 874.1,200.8 880.8,199.9 885.1,204.1 889.3,207.1 893.5,207.5 898.2,205.0" fill="none" stroke="#e4e4e4" stroke-width="1.25" stroke-linejoin="round"/>
<rect x="351.95" y="436" width="1.1" height="79" fill="#ea2538"/>
<rect x="350.0" y="436" width="5" height="79" fill="#ea2538"/>
<rect x="357.95" y="473" width="1.1" height="9" fill="#ea2538"/>
<rect x="356.0" y="473" width="5" height="9" fill="#ea2538"/>
<rect x="363.95" y="444" width="1.1" height="28" fill="#ea2538"/>
<rect x="362.0" y="444" width="5" height="28" fill="#ea2538"/>
<rect x="369.95" y="451" width="1.1" height="68" fill="#ea2538"/>
<rect x="368.0" y="451" width="5" height="68" fill="#ea2538"/>
<rect x="375.95" y="519" width="1.1" height="88" fill="#ea2538"/>
<rect x="374.0" y="525" width="5" height="39" fill="#ea2538"/>
<rect x="381.95" y="545" width="1.1" height="73" fill="#ea2538"/>
<rect x="380.0" y="545" width="5" height="25" fill="#ea2538"/>
<rect x="387.95" y="552" width="1.1" height="1" fill="#12b357"/>
<rect x="386.0" y="552" width="5" height="1" fill="#12b357"/>
<rect x="393.95" y="508" width="1.1" height="30" fill="#12b357"/>
<rect x="392.0" y="508" width="5" height="26" fill="#12b357"/>
<rect x="399.95" y="453" width="1.1" height="30" fill="#12b357"/>
<rect x="398.0" y="470" width="5" height="7" fill="#12b357"/>
<rect x="405.95" y="448" width="1.1" height="8" fill="#12b357"/>
<rect x="404.0" y="450" width="5" height="6" fill="#12b357"/>
<rect x="411.95" y="463" width="1.1" height="27" fill="#ea2538"/>
<rect x="410.0" y="463" width="5" height="25" fill="#ea2538"/>
<rect x="417.95" y="522" width="1.1" height="19" fill="#ea2538"/>
<rect x="416.0" y="522" width="5" height="19" fill="#ea2538"/>
<rect x="423.95" y="571" width="1.1" height="33" fill="#ea2538"/>
<rect x="422.0" y="571" width="5" height="12" fill="#ea2538"/>
<rect x="429.95" y="546" width="1.1" height="36" fill="#12b357"/>
<rect x="428.0" y="546" width="5" height="36" fill="#12b357"/>
<rect x="435.95" y="480" width="1.1" height="47" fill="#12b357"/>
<rect x="434.0" y="480" width="5" height="47" fill="#12b357"/>
<rect x="441.95" y="428" width="1.1" height="63" fill="#12b357"/>
<rect x="440.0" y="464" width="5" height="27" fill="#12b357"/>
<rect x="447.95" y="339" width="1.1" height="81" fill="#12b357"/>
<rect x="446.0" y="344" width="5" height="76" fill="#12b357"/>
<rect x="453.95" y="369" width="1.1" height="31" fill="#ea2538"/>
<rect x="452.0" y="373" width="5" height="16" fill="#ea2538"/>
<rect x="459.95" y="368" width="1.1" height="36" fill="#12b357"/>
<rect x="458.0" y="375" width="5" height="29" fill="#12b357"/>
<rect x="465.95" y="371" width="1.1" height="11" fill="#ea2538"/>
<rect x="464.0" y="371" width="5" height="9" fill="#ea2538"/>
<rect x="471.95" y="383" width="1.1" height="31" fill="#ea2538"/>
<rect x="470.0" y="399" width="5" height="3" fill="#ea2538"/>
<rect x="477.95" y="345" width="1.1" height="39" fill="#12b357"/>
<rect x="476.0" y="380" width="5" height="4" fill="#12b357"/>
<rect x="483.95" y="368" width="1.1" height="31" fill="#ea2538"/>
<rect x="482.0" y="368" width="5" height="24" fill="#ea2538"/>
<rect x="489.95" y="365" width="1.1" height="23" fill="#12b357"/>
<rect x="488.0" y="379" width="5" height="9" fill="#12b357"/>
<rect x="495.95" y="395" width="1.1" height="21" fill="#ea2538"/>
<rect x="494.0" y="395" width="5" height="21" fill="#ea2538"/>
<rect x="501.95" y="414" width="1.1" height="18" fill="#12b357"/>
<rect x="500.0" y="414" width="5" height="14" fill="#12b357"/>
<rect x="507.95" y="441" width="1.1" height="11" fill="#ea2538"/>
<rect x="506.0" y="441" width="5" height="3" fill="#ea2538"/>
<rect x="513.95" y="469" width="1.1" height="63" fill="#ea2538"/>
<rect x="512.0" y="475" width="5" height="53" fill="#ea2538"/>
<rect x="519.95" y="515" width="1.1" height="20" fill="#ea2538"/>
<rect x="518.0" y="520" width="5" height="10" fill="#ea2538"/>
<rect x="525.95" y="490" width="1.1" height="49" fill="#12b357"/>
<rect x="524.0" y="490" width="5" height="32" fill="#12b357"/>
<rect x="531.95" y="506" width="1.1" height="11" fill="#ea2538"/>
<rect x="530.0" y="506" width="5" height="11" fill="#ea2538"/>
<rect x="537.95" y="480" width="1.1" height="42" fill="#12b357"/>
<rect x="536.0" y="480" width="5" height="31" fill="#12b357"/>
<rect x="543.95" y="462" width="1.1" height="11" fill="#12b357"/>
<rect x="542.0" y="467" width="5" height="6" fill="#12b357"/>
<rect x="549.95" y="468" width="1.1" height="33" fill="#ea2538"/>
<rect x="548.0" y="468" width="5" height="29" fill="#ea2538"/>
<rect x="555.95" y="457" width="1.1" height="31" fill="#12b357"/>
<rect x="554.0" y="466" width="5" height="22" fill="#12b357"/>
<rect x="561.95" y="413" width="1.1" height="69" fill="#12b357"/>
<rect x="560.0" y="413" width="5" height="61" fill="#12b357"/>
<rect x="567.95" y="434" width="1.1" height="25" fill="#12b357"/>
<rect x="566.0" y="436" width="5" height="9" fill="#12b357"/>
<rect x="573.95" y="414" width="1.1" height="8" fill="#12b357"/>
<rect x="572.0" y="420" width="5" height="1" fill="#12b357"/>
<rect x="579.95" y="390" width="1.1" height="21" fill="#12b357"/>
<rect x="578.0" y="391" width="5" height="20" fill="#12b357"/>
<rect x="585.95" y="380" width="1.1" height="20" fill="#12b357"/>
<rect x="584.0" y="384" width="5" height="3" fill="#12b357"/>
<rect x="591.95" y="368" width="1.1" height="32" fill="#12b357"/>
<rect x="590.0" y="374" width="5" height="13" fill="#12b357"/>
<rect x="597.95" y="386" width="1.1" height="36" fill="#ea2538"/>
<rect x="596.0" y="401" width="5" height="11" fill="#ea2538"/>
<rect x="603.95" y="405" width="1.1" height="36" fill="#ea2538"/>
<rect x="602.0" y="405" width="5" height="19" fill="#ea2538"/>
<rect x="609.95" y="393" width="1.1" height="43" fill="#12b357"/>
<rect x="608.0" y="397" width="5" height="35" fill="#12b357"/>
<rect x="615.95" y="377" width="1.1" height="31" fill="#ea2538"/>
<rect x="614.0" y="386" width="5" height="8" fill="#ea2538"/>
<rect x="621.95" y="359" width="1.1" height="37" fill="#12b357"/>
<rect x="620.0" y="375" width="5" height="21" fill="#12b357"/>
<rect x="627.95" y="359" width="1.1" height="49" fill="#12b357"/>
<rect x="626.0" y="369" width="5" height="25" fill="#12b357"/>
<rect x="633.95" y="326" width="1.1" height="43" fill="#12b357"/>
<rect x="632.0" y="338" width="5" height="31" fill="#12b357"/>
<rect x="639.95" y="317" width="1.1" height="27" fill="#12b357"/>
<rect x="638.0" y="324" width="5" height="15" fill="#12b357"/>
<rect x="645.95" y="281" width="1.1" height="40" fill="#12b357"/>
<rect x="644.0" y="300" width="5" height="21" fill="#12b357"/>
<rect x="651.95" y="247" width="1.1" height="41" fill="#12b357"/>
<rect x="650.0" y="249" width="5" height="35" fill="#12b357"/>
<rect x="657.95" y="182" width="1.1" height="68" fill="#12b357"/>
<rect x="656.0" y="197" width="5" height="41" fill="#12b357"/>
<rect x="663.95" y="132" width="1.1" height="86" fill="#ea2538"/>
<rect x="662.0" y="162" width="5" height="37" fill="#ea2538"/>
<rect x="669.95" y="184" width="1.1" height="62" fill="#12b357"/>
<rect x="668.0" y="209" width="5" height="21" fill="#12b357"/>
<rect x="675.95" y="230" width="1.1" height="54" fill="#ea2538"/>
<rect x="674.0" y="239" width="5" height="35" fill="#ea2538"/>
<rect x="681.95" y="237" width="1.1" height="43" fill="#ea2538"/>
<rect x="680.0" y="253" width="5" height="21" fill="#ea2538"/>
<rect x="687.95" y="236" width="1.1" height="30" fill="#12b357"/>
<rect x="686.0" y="240" width="5" height="21" fill="#12b357"/>
<rect x="693.95" y="235" width="1.1" height="26" fill="#ea2538"/>
<rect x="692.0" y="244" width="5" height="10" fill="#ea2538"/>
<rect x="699.95" y="207" width="1.1" height="40" fill="#12b357"/>
<rect x="698.0" y="207" width="5" height="32" fill="#12b357"/>
<rect x="705.95" y="204" width="1.1" height="37" fill="#12b357"/>
<rect x="704.0" y="205" width="5" height="14" fill="#12b357"/>
<rect x="711.95" y="214" width="1.1" height="59" fill="#ea2538"/>
<rect x="710.0" y="226" width="5" height="46" fill="#ea2538"/>
<rect x="717.95" y="238" width="1.1" height="31" fill="#ea2538"/>
<rect x="716.0" y="253" width="5" height="11" fill="#ea2538"/>
<rect x="723.95" y="239" width="1.1" height="36" fill="#ea2538"/>
<rect x="722.0" y="270" width="5" height="1" fill="#ea2538"/>
<rect x="729.95" y="235" width="1.1" height="35" fill="#12b357"/>
<rect x="728.0" y="237" width="5" height="33" fill="#12b357"/>
<rect x="735.95" y="214" width="1.1" height="32" fill="#ea2538"/>
<rect x="734.0" y="223" width="5" height="4" fill="#ea2538"/>
<rect x="741.95" y="212" width="1.1" height="61" fill="#ea2538"/>
<rect x="740.0" y="231" width="5" height="33" fill="#ea2538"/>
<rect x="747.95" y="242" width="1.1" height="32" fill="#12b357"/>
<rect x="746.0" y="242" width="5" height="30" fill="#12b357"/>
<rect x="753.95" y="235" width="1.1" height="43" fill="#ea2538"/>
<rect x="752.0" y="237" width="5" height="23" fill="#ea2538"/>
<rect x="759.95" y="262" width="1.1" height="43" fill="#ea2538"/>
<rect x="758.0" y="262" width="5" height="29" fill="#ea2538"/>
<rect x="765.95" y="255" width="1.1" height="34" fill="#12b357"/>
<rect x="764.0" y="275" width="5" height="8" fill="#12b357"/>
<rect x="771.95" y="249" width="1.1" height="47" fill="#ea2538"/>
<rect x="770.0" y="280" width="5" height="11" fill="#ea2538"/>
<rect x="777.95" y="269" width="1.1" height="48" fill="#ea2538"/>
<rect x="776.0" y="288" width="5" height="1" fill="#ea2538"/>
<rect x="783.95" y="308" width="1.1" height="32" fill="#ea2538"/>
<rect x="782.0" y="313" width="5" height="19" fill="#ea2538"/>
<rect x="789.95" y="273" width="1.1" height="63" fill="#12b357"/>
<rect x="788.0" y="286" width="5" height="41" fill="#12b357"/>
<rect x="795.95" y="230" width="1.1" height="51" fill="#12b357"/>
<rect x="794.0" y="242" width="5" height="39" fill="#12b357"/>
<rect x="801.95" y="226" width="1.1" height="32" fill="#ea2538"/>
<rect x="800.0" y="233" width="5" height="11" fill="#ea2538"/>
<rect x="807.95" y="190" width="1.1" height="56" fill="#12b357"/>
<rect x="806.0" y="208" width="5" height="28" fill="#12b357"/>
<rect x="813.95" y="203" width="1.1" height="58" fill="#12b357"/>
<rect x="812.0" y="207" width="5" height="33" fill="#12b357"/>
<rect x="819.95" y="174" width="1.1" height="47" fill="#12b357"/>
<rect x="818.0" y="193" width="5" height="15" fill="#12b357"/>
<rect x="825.95" y="143" width="1.1" height="57" fill="#12b357"/>
<rect x="824.0" y="152" width="5" height="33" fill="#12b357"/>
<rect x="831.95" y="152" width="1.1" height="55" fill="#ea2538"/>
<rect x="830.0" y="168" width="5" height="28" fill="#ea2538"/>
<rect x="837.95" y="163" width="1.1" height="40" fill="#ea2538"/>
<rect x="836.0" y="187" width="5" height="10" fill="#ea2538"/>
<rect x="843.95" y="170" width="1.1" height="32" fill="#12b357"/>
<rect x="842.0" y="174" width="5" height="18" fill="#12b357"/>
<rect x="849.95" y="150" width="1.1" height="47" fill="#ea2538"/>
<rect x="848.0" y="177" width="5" height="14" fill="#ea2538"/>
<rect x="855.95" y="186" width="1.1" height="51" fill="#ea2538"/>
<rect x="854.0" y="194" width="5" height="31" fill="#ea2538"/>
<rect x="861.95" y="218" width="1.1" height="29" fill="#12b357"/>
<rect x="860.0" y="224" width="5" height="14" fill="#12b357"/>
<rect x="867.95" y="209" width="1.1" height="43" fill="#ea2538"/>
<rect x="866.0" y="226" width="5" height="26" fill="#ea2538"/>
<rect x="873.95" y="189" width="1.1" height="56" fill="#12b357"/>
<rect x="872.0" y="212" width="5" height="24" fill="#12b357"/>
<rect x="879.95" y="176" width="1.1" height="54" fill="#12b357"/>
<rect x="878.0" y="180" width="5" height="15" fill="#12b357"/>
<rect x="885.95" y="178" width="1.1" height="45" fill="#ea2538"/>
<rect x="884.0" y="186" width="5" height="31" fill="#ea2538"/>
<rect x="891.95" y="175" width="1.1" height="44" fill="#12b357"/>
<rect x="890.0" y="212" width="5" height="1" fill="#12b357"/>
<rect x="897.95" y="163" width="1.1" height="62" fill="#12b357"/>
<rect x="896.0" y="167" width="5" height="43" fill="#12b357"/>
<line x1="25" x2="961" y1="197.5" y2="197.5" stroke="#bcbcbc" stroke-width="1.25" stroke-dasharray="5.5 5.5"/>
<line x1="700.4" x2="700.4" y1="71" y2="668" stroke="#b8b8b8" stroke-width="1.3" stroke-dasharray="5.5 5.5"/>
</svg>

<!-- legend -->
<div class="abs txt" style="left:34px;top:78px;font-size:16.5px;line-height:20px;color:#ececec;white-space:pre">GBL DEC24 Futures · 1D · EUREX</div>
<div class="leg" style="left:300.0px;top:79px">O - Aper.</div>
<div class="leg" style="left:411.4px;top:79px">H - Max.</div>
<div class="leg" style="left:520.4px;top:79px">L - Min.</div>
<div class="leg" style="left:623.8px;top:79px">C - Chius.</div>
<div class="leg" style="left:741.5px;top:79px">Vol</div>
<div class="val g" style="left:360.2px;top:79px">134.10</div>
<div class="val g" style="left:467.7px;top:79px">134.57</div>
<div class="val g" style="left:571.6px;top:79px">133.98</div>
<div class="val g" style="left:689.5px;top:79px">134.56</div>
<div class="val g" style="left:762.1px;top:79px">121</div>
<div class="leg" style="left:33.5px;top:103px">BB 20 2</div>
<div class="val o" style="left:93.10000000000001px;top:103px">133.10</div>
<div class="val b" style="left:145.29999999999998px;top:103px">135.28</div>
<div class="val b" style="left:197.1px;top:103px">130.91</div>
<div class="leg" style="left:33.5px;top:127px">MA 10 close 0 SMA 9</div>
<div class="val w" style="left:178.7px;top:127px">134.09</div>
<div class="val b" style="left:230.7px;top:127px">133.37</div>
<div class="leg" style="left:34px;top:151px">Volume SMA 9</div>
<div class="val g" style="left:135.7px;top:151px">121</div>
<div class="leg" style="left:33.5px;top:175px">EMA 950 close 0 EMA 9</div>
<div class="val gr" style="left:194.5px;top:175px">∅</div>
<div class="val gr" style="left:212px;top:175px">∅</div>
<div class="abs" style="left:34px;top:197.5px;width:29px;height:20.5px;border:1px solid #3a3e4a;border-radius:3px"></div>

<!-- price labels -->
<div class="abs txt" style="left:872px;top:91.5px;width:88px;height:28.6px;background:#15295c;border-radius:2px 0 0 2px;font-weight:normal;-webkit-text-stroke:0.5px;font-size:18.5px;letter-spacing:0.05px;line-height:30.6px;text-align:center;padding-right:2px;color:#fff">Massimo</div>
<div class="pl" style="top:91.5px;background:#15295c;border-radius:0 2px 0 0">135.66</div>
<div class="pl" style="top:120.5px;height:28.3px;padding-top:1px;background:#2196f3;border-radius:0 0 2px 2px">135.61</div>
<div class="pl" style="top:153px;height:28px;background:#1aaf54;border-radius:2px 2px 0 0">135.14</div>
<div class="pl" style="top:215px;height:2px;background:#2196f3"></div>
<div class="pl" style="top:181px;height:34px;line-height:34px;padding-top:0.5px;background:#363a45">134.71</div>
<div class="pl" style="top:216.6px;height:27.6px;line-height:27.6px;padding-top:1px;background:#fff;color:#111">134.59</div>
<div class="pl" style="top:244.2px;background:#ff6d00;border-radius:0 0 2px 2px">134.45</div>
<div class="ax" style="top:305px">133.00</div>
<div class="pl" style="top:282px;background:#2196f3;border-radius:2px">133.28</div>
<div class="pl" style="top:314px;background:#ffeb3b;color:#111;border-radius:2px">132.83</div>
<div class="ax" style="top:375px">132.00</div>
<div class="ax" style="top:444.5px">131.00</div>
<div class="pl" style="top:417px;background:#ffeb3b;color:#111;border-radius:2px">131.35</div>
<div class="ax" style="top:514px">130.00</div>
<div class="ax" style="top:584px">129.00</div>
<div class="ax" style="top:653px;height:15px;overflow:hidden">128.00</div>
<div class="abs txt" style="left:882px;top:604px;width:78px;height:28.6px;background:#15295c;border-radius:2px 0 0 2px;font-weight:normal;-webkit-text-stroke:0.5px;font-size:18.5px;letter-spacing:0.5px;line-height:30.6px;text-align:center;padding-right:1px;color:#fff">Minimo</div>
<div class="pl" style="top:604px;background:#15295c">128.66</div>
<div class="pl" style="top:633px;width:103px;height:29px;line-height:29px;background:#1aaf54;border-radius:0 2px 2px 2px">228.144K</div>

<!-- time axis -->
<div class="abs" style="left:25px;top:668px;width:1044px;height:1px;background:#3c3c46"></div>
<div class="abs" style="left:25px;top:669px;width:1044px;height:33px;background:#1a1a1a"></div>
<div class="tl" style="left:135.5px">Apr</div>
<div class="tl" style="left:262px">Mag</div>
<div class="tl" style="left:394px">Giu</div>
<div class="tl" style="left:514px">Lug</div>
<div class="tl" style="left:653px">Ago</div>
<div class="tl" style="left:784px">Set</div>
<div class="tl" style="left:928px">Ott</div>
<div class="abs txt" style="left:641px;top:668.5px;width:120px;height:34px;background:#363a45;font-size:19px;line-height:38px;text-align:center;color:#f0f0f0;white-space:pre">13 Ago '24</div>

<svg class="abs" style="left:0;top:0" width="1070" height="702" viewBox="0 0 1070 702" fill="none" stroke-linecap="round" stroke-linejoin="round">
<!-- title dropdown -->
<polygon points="149.3,9.7 158.3,9.7 153.8,15.7" fill="#ffffff"/>
<!-- titlebar right icons -->
<g fill="#8a8a8a">
<circle cx="977.8" cy="11.3" r="5.9"/>
<polygon points="973.2,14.5 972,17.2 976,16.6"/>
<circle cx="982.9" cy="15.6" r="3.4"/>
<polygon points="984,17.8 986.2,18.9 985.6,16"/>
</g>
<path d="M975.9 9.9h1.1l1-2.1c.7 0 1 .4 1 1v1.1h1.4c.5 0 .8.4.7.9l-.5 2.1c-.1.4-.4.6-.8.6h-3.9z" fill="#1a1a1a"/>
<g stroke="#9a9a9a" stroke-width="1.4">
<rect x="-6" y="-2.6" width="12" height="5.2" rx="2.6" transform="translate(1005.5 8.7) rotate(-45)"/>
<rect x="-6" y="-2.6" width="12" height="5.2" rx="2.6" transform="translate(999.6 14.6) rotate(-45)"/>
</g>
<g stroke="#9a9a9a" stroke-width="1.3">
<path d="M1018.2 16.8l4.2-4.2"/>
<path d="M1020 10.6l4.6 4.6M1021.3 11.9l3.6-3.9M1023.5 14.1l3.8-3.6M1023.6 6.3l5.2 5.2"/>
</g>
<polygon points="1035.2,8.3 1045,8.3 1040.1,13.8" fill="#8c8c8c"/>
<rect x="1058" y="14.7" width="12" height="2" fill="#8c8c8c"/>

<!-- toolbar: candles -->
<g stroke="#d6d6da" stroke-width="1.1">
<rect x="28.3" y="41.8" width="4.4" height="12.9"/>
<path d="M30.5 38.2v3.6M30.5 54.7v3"/>
<rect x="36.5" y="44.2" width="4.2" height="7.8"/>
<path d="M38.6 41.2v3M38.6 52v2.8"/>
</g>
<!-- fx -->
<g stroke="#d6d6da" stroke-width="1.1">
<path d="M84.8 41c-.4-1.500-4.900-2.300-4.900 1.800v9c0 3.200-3.900 3.600-5.700 1.700"/>
<path d="M75.900 45.500h6.800"/>
<path d="M82.200 51l5 5.300M87.200 51l-5 5.300"/>
</g>
<!-- grid -->
<g stroke="#d6d6da" stroke-width="1.2">
<rect x="185.6" y="40.800" width="5.200" height="5.200" rx="1.500"/>
<rect x="195" y="40.800" width="5.200" height="5.200" rx="1.500"/>
<rect x="185.6" y="50.100" width="5.200" height="5.200" rx="1.500"/>
<rect x="195" y="50.100" width="5.200" height="5.200" rx="1.500"/>
</g>
<!-- save -->
<path d="M232.400 41.100h9.700l3 3v9.300a1 1 0 0 1-1 1h-11.700a1 1 0 0 1-1-1v-11.300a1 1 0 0 1 1-1z" fill="#cfd1da"/>
<rect x="234.100" y="42.300" width="8.200" height="3.700" fill="#1b1b1c"/>
<rect x="239.800" y="42.900" width="1.500" height="2.500" fill="#cfd1da"/>
<rect x="233.900" y="49.500" width="8.700" height="4.100" fill="#1b1b1c"/>
<!-- folder -->
<path d="M279.400 41.900h4l1.500 1.700h6.500a1 1 0 0 1 1 1v8.400a1 1 0 0 1-1 1h-12a1 1 0 0 1-1-1v-10.100a1 1 0 0 1 1-1z" fill="#cfd1da"/>
<!-- help -->
<circle cx="332" cy="47.900" r="6.900" stroke="#e0e0e4" stroke-width="1.600"/>
<!-- info -->
<circle cx="379.800" cy="47.900" r="7.600" stroke="#d6d6da" stroke-width="1.100"/>
<path d="M379.900 46.700v5" stroke="#d6d6da" stroke-width="1"/>
<circle cx="379.900" cy="44.300" r=".65" fill="#d6d6da"/>
<!-- undo / redo -->
<g stroke="#4c4c55" stroke-width="1.200">
<path d="M425.300 43.200l-3.800 3.800 3.800 3.800M421.600 47h7.600c2.500 0 4.300 2 4.300 4.300v1.500"/>
<path d="M468.200 43.200l3.800 3.800-3.800 3.800M471.900 47h-7.600c-2.500 0-4.300 2-4.300 4.300v1.500"/>
</g>
<!-- quick search -->
<g stroke="#d6d6da" stroke-width="1.100">
<path d="M1057.500 40.100a7.400 7.400 0 1 0 9.200 8.400"/>
<path d="M1063.100 36.900l-4.900 6.900 3.100.8 1 5.400 4.600-7.400-2.900-.7z"/>
<path d="M1064.900 52.800l5.100 4.900"/>
</g>

<!-- legend collapse chevron -->
<path d="M45 209.600l3.600-3.600 3.600 3.600" stroke="#d6d6da" stroke-width="1.500"/>

<!-- left toolbar icons -->
<g stroke="#d6d6da" stroke-width="1.100">
<rect x="0" y="94.800" width="7" height="1.500" fill="#2196f3" stroke="none"/>
<circle cx="3.500" cy="122.500" r="2"/>
<path d="M2 124l-3 2.500"/>
<path d="M0 157.500h6M0 169.500h6M0 175.300h6"/>
<circle cx="5.400" cy="163.500" r="2"/>
<path d="M0 163.500h3.400"/>
<circle cx="1.500" cy="195" r="2"/>
<circle cx="4.500" cy="209" r="2"/>
<path d="M1.900 197l2.100 10"/>
<path d="M0 231h5M0 248h5"/>
<circle cx="3" cy="242" r="2"/>
<path d="M0 242h1"/>
<path d="M0 273.600l1.500-.6 6.700-5.700"/>
<path d="M0 303h2.500v3"/>
<circle cx="-3.500" cy="347" r="9"/>
<path d="M0 384l6.500 5.800-6.500 6"/>
<path d="M0 425.500c1.500.8 2.300 2.300 2.300 4.200s-.8 3.600-2.300 4.500M0 436.300l3.200 3.700"/>
<path d="M0 473.500c2 .3 3 2 3 4v9.500h-3M0 481.500h3"/>
<path d="M0 515.500c2 0 3.300 1.200 3.300 3.500M0 521.500h4.500a.7.7 0 0 1 .7.700v3.800a.7.700 0 0 1-.7.700h-4.500"/>
<path d="M0 552.300h1.500a1.500 1.500 0 0 1 1.500 1.500v7a1.500 1.500 0 0 1-1.500 1.500h-1.500"/>
<path d="M0 581.500l3 3.500-3 4M0 597.500l1.500-2 1.500 1 2.500-2.500"/>
<path d="M3 632v16h-3"/>
</g>
<rect x="0" y="525.300" width="2.500" height="1.500" fill="#d6d6da"/>

<!-- collapse pill -->
<rect x="15.100" y="644.400" width="15.400" height="51.600" rx="7.700" fill="#1a1a1a" stroke="#21212c" stroke-width="2"/>
<path d="M25.700 663.700l-5.200 6.500 5.200 6.500" stroke="#d0d0d0" stroke-width="1.500"/>

<!-- settings hexagon -->
<g stroke="#c8c8cc" stroke-width="1.100">
<path d="M1009.800 690.600l3.200-5.500h6.300l3.200 5.500-3.200 5.500h-6.300z"/>
<circle cx="1016.100" cy="690.600" r="2.200"/>
</g>
</svg>
<div class="abs" style="left:327px;top:40.500px;width:10px;height:15px;font-weight:bold;font-size:12.500px;line-height:15px;text-align:center;color:#e6e6ea">?</div>

</body>
</html>
